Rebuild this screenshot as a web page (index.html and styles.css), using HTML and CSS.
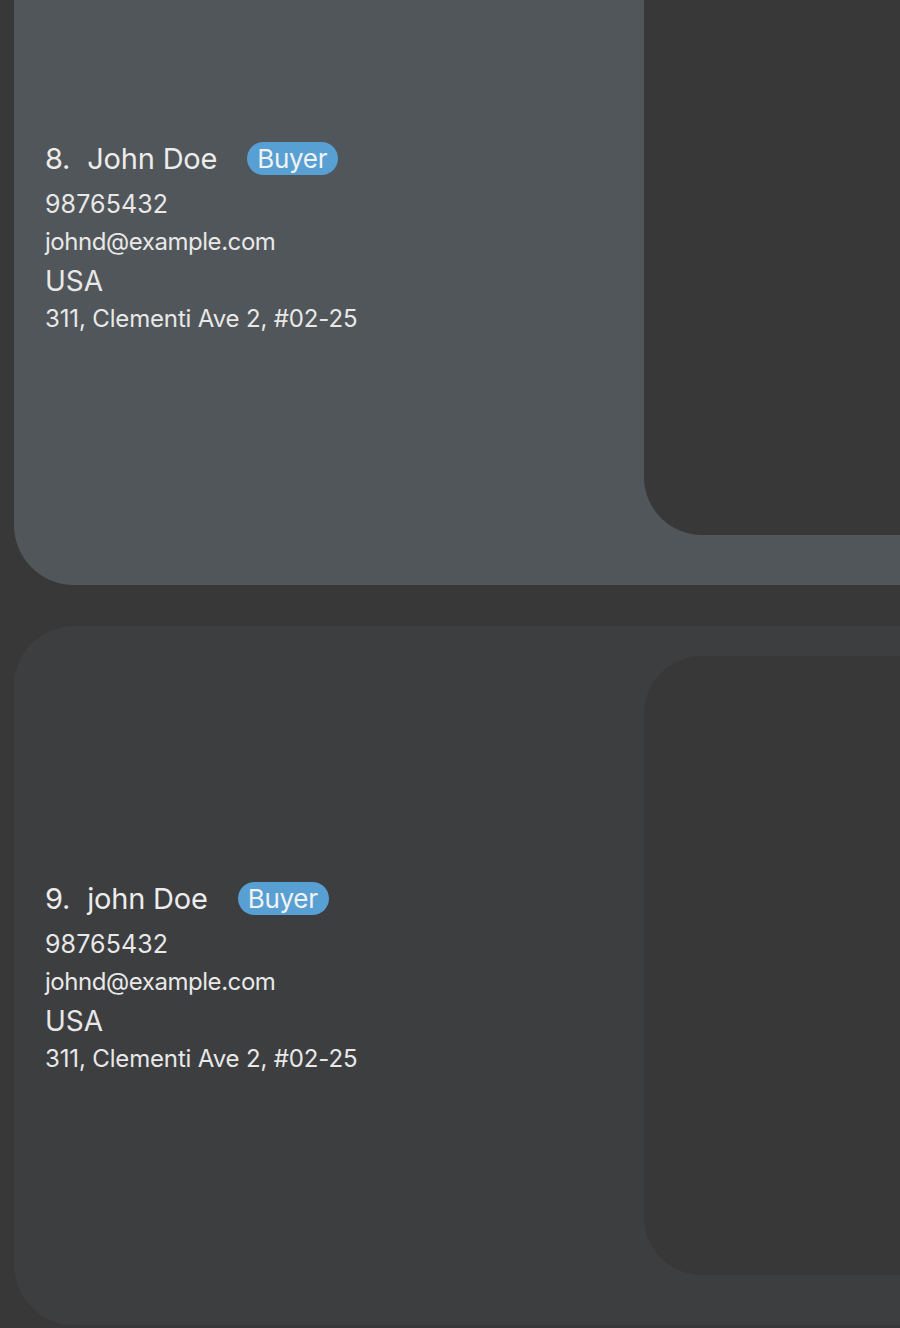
FILE: index.html
```html
<!DOCTYPE html>
<html>
<head>
<meta charset="utf-8">
<link rel="stylesheet" href="styles.css">
</head>
<body>
<div class="list">
  <div class="card card-selected">
    <div class="info">
      <div class="title">
        <span class="idx">8.</span>
        <span class="name">John Doe</span>
        <span class="tag">Buyer</span>
      </div>
      <div class="line l-phone">98765432</div>
      <div class="line l-email">johnd@example.com</div>
      <div class="line l-country">USA</div>
      <div class="line l-addr">311, Clementi Ave 2, #02-25</div>
    </div>
    <div class="side"></div>
  </div>
  <div class="card">
    <div class="info">
      <div class="title">
        <span class="idx">9.</span>
        <span class="name">john Doe</span>
        <span class="tag">Buyer</span>
      </div>
      <div class="line l-phone">98765432</div>
      <div class="line l-email">johnd@example.com</div>
      <div class="line l-country">USA</div>
      <div class="line l-addr">311, Clementi Ave 2, #02-25</div>
    </div>
    <div class="side"></div>
  </div>
</div>
</body>
</html>
```
FILE: styles.css
```css
html, body {
  margin: 0;
  padding: 0;
  background: #383838;
  overflow: hidden;
  width: 900px;
  height: 1328px;
}
body {
  font-family: Inter, "Noto Sans", sans-serif;
  color: #e8e8e8;
}
.list {
  margin-top: -114px;
  padding-left: 14px;
  display: flex;
  flex-direction: column;
  gap: 41px;
}
.card {
  display: flex;
  width: 886px;
  height: 699px;
  background: #3d3e40;
  border-radius: 60px 0 0 60px;
  box-sizing: border-box;
  padding: 30px 0 50px 0;
}
.card-selected {
  background: #51565a;
}
.info {
  width: 630px;
  flex: none;
  box-sizing: border-box;
  padding-left: 31px;
  display: flex;
  flex-direction: column;
  justify-content: center;
  padding-top: 24px;
}
.side {
  flex: 1;
  background: #383838;
  border-radius: 58px 0 0 58px;
}
.title {
  display: flex;
  align-items: center;
  height: 40px;
  font-size: 29px;
  color: #ececec;
  letter-spacing: -0.2px;
}
.idx {
  margin-right: 17px;
}
.tag {
  margin-left: 30px;
  background: #58a0d3;
  color: #f2f2f2;
  font-size: 26px;
  height: 33px;
  line-height: 33px;
  padding: 0 11px 0 10px;
  border-radius: 17px;
  letter-spacing: -0.3px;
}
.line {
  white-space: nowrap;
}
.l-phone {
  font-size: 25px;
  margin-top: 6px;
  line-height: 38px;
  letter-spacing: 0.1px;
}
.l-email {
  font-size: 24px;
  line-height: 38px;
  letter-spacing: -0.45px;
}
.l-country {
  font-size: 28px;
  line-height: 40px;
}
.l-addr {
  font-size: 24px;
  line-height: 36px;
  letter-spacing: -0.15px;
}
```
